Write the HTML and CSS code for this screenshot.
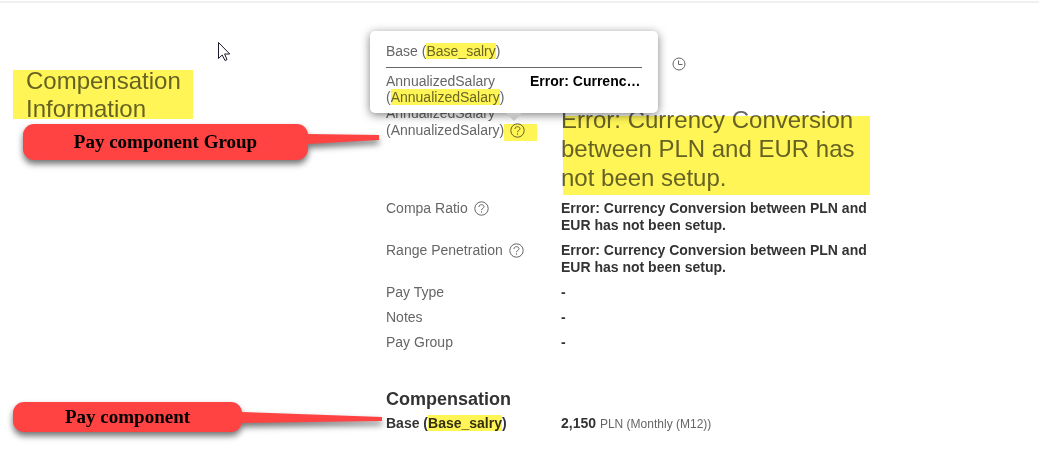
FILE: index.html
```html
<!DOCTYPE html>
<html lang="en">
<head>
  <meta charset="UTF-8">
  <title>Compensation Information</title>
  <link rel="stylesheet" href="styles.css">
</head>
<body>
  <div class="page">
    <aside class="sidebar">
      <h1 class="marked title">Compensation Information</h1>
    </aside>

    <main class="content">
      <div class="toolbar">
        <button class="icon-btn" aria-label="History">
          <svg width="14" height="14" viewBox="0 0 14 14"><circle cx="7" cy="7" r="6"/><path d="M6.5 3.5v4H10.5"/></svg>
        </button>
      </div>

      <dl class="fields">
        <dt>AnnualizedSalary (AnnualizedSalary)<button class="icon-btn help marked" aria-label="Help">
          <svg width="15" height="15" viewBox="0 0 15 15"><circle cx="7.5" cy="7.5" r="6.7"/><path d="M5 6C5 4.4 6 3.7 7.5 3.7S10 4.5 10 5.7C10 7.3 7.5 7.3 7.5 9.2M7.5 10.3v1.3"/></svg>
        </button></dt>
        <dd class="big marked">Error: Currency Conversion between PLN and EUR has not been setup.</dd>

        <dt>Compa Ratio<button class="icon-btn help" aria-label="Help">
          <svg width="15" height="15" viewBox="0 0 15 15"><circle cx="7.5" cy="7.5" r="6.7"/><path d="M5 6C5 4.4 6 3.7 7.5 3.7S10 4.5 10 5.7C10 7.3 7.5 7.3 7.5 9.2M7.5 10.3v1.3"/></svg>
        </button></dt>
        <dd>Error: Currency Conversion between PLN and EUR has not been setup.</dd>

        <dt>Range Penetration<button class="icon-btn help" aria-label="Help">
          <svg width="15" height="15" viewBox="0 0 15 15"><circle cx="7.5" cy="7.5" r="6.7"/><path d="M5 6C5 4.4 6 3.7 7.5 3.7S10 4.5 10 5.7C10 7.3 7.5 7.3 7.5 9.2M7.5 10.3v1.3"/></svg>
        </button></dt>
        <dd>Error: Currency Conversion between PLN and EUR has not been setup.</dd>

        <dt>Pay Type</dt>
        <dd>-</dd>
        <dt>Notes</dt>
        <dd>-</dd>
        <dt>Pay Group</dt>
        <dd>-</dd>
      </dl>

      <h2>Compensation</h2>
      <dl class="fields">
        <dt class="strong">Base (<mark>Base_salry</mark>)</dt>
        <dd>2,150 <small>PLN (Monthly (M12))</small></dd>
      </dl>

      <div class="popup" role="tooltip">
        <p class="popup-title">Base (<mark>Base_salry</mark>)</p>
        <dl class="popup-row">
          <dt>AnnualizedSalary (<mark>AnnualizedSalary</mark>)</dt>
          <dd>Error: Currency Conversion between PLN and EUR has not been setup.</dd>
        </dl>
      </div>
    </main>

    <!-- annotations -->
    <div class="callout callout-group">
      <span>Pay component Group</span>
      <svg class="tail" width="71" height="10" viewBox="0 0 71 10"><path d="M0 0L71 1V6L0 10z"/></svg>
    </div>
    <div class="callout callout-component">
      <span>Pay component</span>
      <svg class="tail" width="140" height="11" viewBox="0 0 140 11"><path d="M0 0L140 5V9L0 11z"/></svg>
    </div>
    <svg class="cursor" width="13" height="20" viewBox="0 0 13 20"><path d="M.5 .5V16.5L4.2 13L7 18.5L9 17.6L6.6 12H11.8z"/></svg>
  </div>
</body>
</html>
```

FILE: styles.css
```css
* { box-sizing: border-box; margin: 0; padding: 0; }
body {
  font-family: "Liberation Sans", Arial, sans-serif;
  font-size: 14px;
  line-height: 17px;
  color: #666;
  background: #fff;
}
.page {
  position: relative;
  display: grid;
  grid-template-columns: 360px minmax(0, 1fr);
  margin-top: 1px;
  padding: 53px 26px 16px;
  border-top: 2px solid #f0f0f0;
}

/* highlighter */
mark { background: #fff557; color: #6a6623; }
.strong mark { color: #333011; }
.marked { position: relative; }
.marked::after {
  content: "";
  position: absolute;
  background: #fff557;
  mix-blend-mode: multiply;
}

.title {
  width: 200px;
  margin-top: 11px;
  font-size: 24px; line-height: 28px; font-weight: 400;
}
.title::after { left: -13px; top: 3px; width: 180px; height: 49px; }

.content { position: relative; }
.toolbar {
  display: flex; justify-content: flex-end;
  width: 300px; height: 49px;
}
.icon-btn {
  height: 16px;
  border: none; background: none;
  cursor: pointer;
}
.icon-btn svg {
  display: block;
  fill: none; stroke: #666; stroke-width: 1;
}
.help { padding: 1px 6px 0; vertical-align: top; }
.help.marked::after { left: 0; top: 2px; width: 33px; height: 17px; }

.fields {
  display: grid;
  grid-template-columns: 175px minmax(0, 310px);
  row-gap: 8px;
}
.fields dd { font-weight: 700; color: #333; }
.fields dd.big { font-size: 24px; line-height: 29px; font-weight: 400; color: #666; }
.big::after { left: 2px; top: 11px; right: 1px; bottom: -3px; }
.fields .strong { font-weight: 700; color: #333; }
.fields small { font-size: 12px; font-weight: 400; color: #666; }
h2 {
  margin: 37px 0 5px;
  font-size: 18px; line-height: 22px;
  color: #333;
}

.popup {
  position: absolute; left: -16px; top: -25px;
  width: 288px; padding: 12px 16px 8px;
  line-height: 16px;
  background: #fff;
  border-radius: 5px;
  box-shadow: 0 2px 10px rgba(0,0,0,0.5);
}
.popup::after {
  content: "";
  position: absolute; left: 136px; top: 100%;
  border: 8px solid transparent;
  border-top-color: #c4c4c4;
  border-bottom: none;
}
.popup-title { padding-bottom: 8px; border-bottom: 1px solid #666; }
.popup-row {
  display: grid;
  grid-template-columns: 144px minmax(0, 1fr);
  padding-top: 5px;
}
.popup-row dd {
  font-weight: 700; color: #000;
  white-space: nowrap; overflow: hidden; text-overflow: ellipsis;
}

.callout {
  position: absolute;
  display: flex; align-items: center; justify-content: center;
  background: #ff4343;
  border-radius: 11px;
  font: 700 19px/22px "Liberation Serif", "Times New Roman", serif;
  color: #000;
  filter: drop-shadow(0 4px 3px rgba(0,0,0,0.55));
}
.tail { position: absolute; left: 100%; top: 10px; fill: #ff4343; }
.callout-group { left: 23px; top: 121px; width: 285px; height: 36px; }
.callout-component { left: 13px; top: 399px; width: 229px; height: 30px; }

.cursor {
  position: absolute; left: 218px; top: 39px;
  fill: #fff; stroke: #1a1a2a; stroke-width: 1;
}
```
